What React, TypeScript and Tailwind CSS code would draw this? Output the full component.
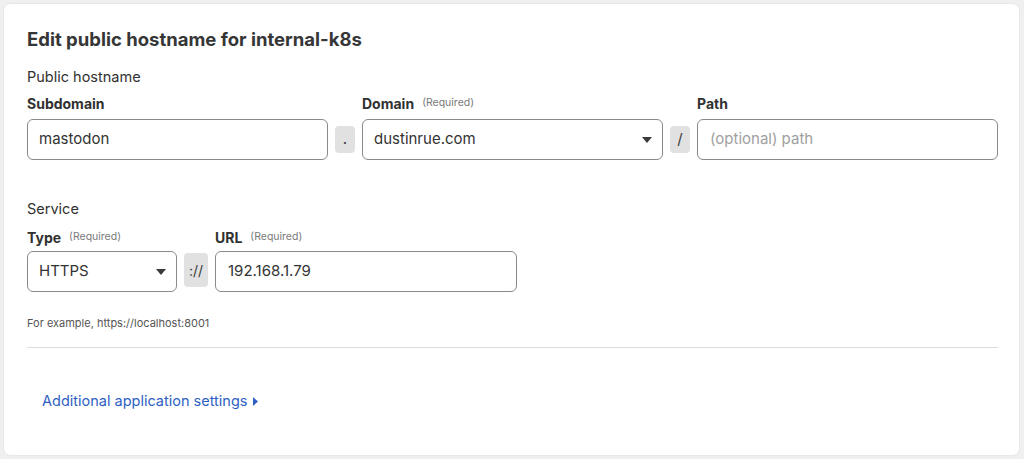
import React from "react";

const Caret = () => (
  <svg width="10" height="6" viewBox="0 0 10 6" className="shrink-0">
    <path d="M0 0 L10 0 L5 6 Z" fill="#3a3a3a" />
  </svg>
);

const Sep = ({ children, w }: { children: React.ReactNode; w: string }) => (
  <div
    className={`${w} h-[27px] shrink-0 rounded-[4px] bg-[#e1e1e1] flex items-center justify-center text-[15px] text-[#3a3a3a]`}
  >
    {children}
  </div>
);

const Label = ({ text, req }: { text: string; req?: boolean }) => (
  <div className="h-[20px] flex items-center gap-[8px]">
    <span className="text-[14px] font-bold text-[#313131]">{text}</span>
    {req && <span className="text-[10.5px] text-[#7a7a7a]">(Required)</span>}
  </div>
);

export default function App() {
  return (
    <div
      className="w-[1024px] h-[459px] bg-[#f0f0f0] pt-[4px] pl-[4px] pr-[5px]"
      style={{ fontFamily: "Inter, 'Noto Sans', sans-serif" }}
    >
      <div className="h-[451px] bg-white rounded-[6px] shadow-[0_0_2px_rgba(0,0,0,0.12)] pl-[23px] pr-[21px] pt-[24px] flex flex-col">
        <div className="h-[24px] flex items-center text-[18.5px] font-bold text-[#363636]">
          Edit public hostname for internal-k8s
        </div>
        <div className="mt-[15px] h-[20px] flex items-center text-[14.5px] text-[#313131]">
          Public hostname
        </div>
        <div className="mt-[6px] flex items-start gap-[7px]">
          <div className="flex-1 flex flex-col">
            <Label text="Subdomain" />
            <div className="mt-[6px] h-[41px] rounded-[6px] border border-[#8a8a8a] flex items-center pl-[11px] text-[15px] text-[#333]">
              mastodon
            </div>
          </div>
          <div className="pt-[33px]">
            <Sep w="w-[20px]">.</Sep>
          </div>
          <div className="flex-1 flex flex-col">
            <Label text="Domain" req />
            <div className="mt-[6px] h-[41px] rounded-[6px] border border-[#8a8a8a] flex items-center justify-between pl-[11px] pr-[10px] text-[15px] text-[#333]">
              <span>dustinrue.com</span>
              <Caret />
            </div>
          </div>
          <div className="pt-[33px]">
            <Sep w="w-[20px]">/</Sep>
          </div>
          <div className="flex-1 flex flex-col">
            <Label text="Path" />
            <div className="mt-[6px] h-[41px] rounded-[6px] border border-[#8a8a8a] flex items-center pl-[12px] text-[15px] text-[#a0a0a0]">
              (optional) path
            </div>
          </div>
        </div>

        <div className="mt-[39px] h-[20px] flex items-center text-[14.5px] text-[#313131]">
          Service
        </div>
        <div className="mt-[8px] flex items-start gap-[7px]">
          <div className="w-[150px] flex flex-col">
            <Label text="Type" req />
            <div className="mt-[4px] h-[41px] rounded-[6px] border border-[#8a8a8a] flex items-center justify-between pl-[11px] pr-[10px] text-[15px] text-[#333]">
              <span>HTTPS</span>
              <Caret />
            </div>
          </div>
          <div className="pt-[26px]">
            <div className="w-[24px] h-[34px] rounded-[4px] bg-[#e1e1e1] flex items-center justify-center text-[14px] text-[#3a3a3a]">
              ://
            </div>
          </div>
          <div className="w-[302px] flex flex-col">
            <Label text="URL" req />
            <div className="mt-[4px] h-[41px] rounded-[6px] border border-[#8a8a8a] flex items-center pl-[12px] text-[15px] text-[#333]">
              192.168.1.79
            </div>
          </div>
        </div>

        <div className="mt-[24px] h-[14px] flex items-center text-[11px] text-[#555]">
          For example, https://localhost:8001
        </div>

        <div className="mt-[17px] h-px bg-[#dcdcdc]" />

        <div className="mt-[43px] h-[20px] flex items-center gap-[6px] pl-[15px] text-[14.5px] text-[#2e5fc4]">
          <span>Additional application settings</span>
          <svg width="5" height="9" viewBox="0 0 5 9">
            <path d="M0 0 L5 4.5 L0 9 Z" fill="#2e5fc4" />
          </svg>
        </div>
      </div>
    </div>
  );
}
